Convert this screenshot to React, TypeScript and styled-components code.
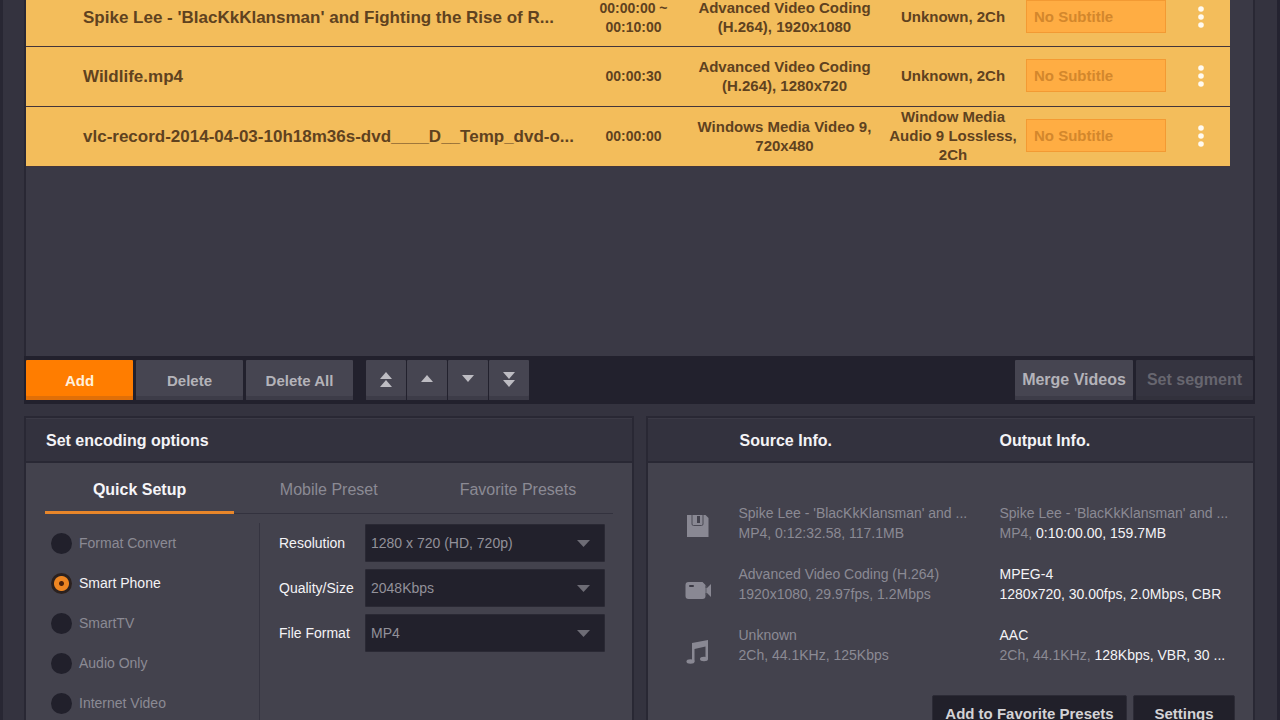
import React, { useState } from "react";
import styled, { createGlobalStyle } from "styled-components";

const GlobalStyle = createGlobalStyle`
  *, *::before, *::after { box-sizing: border-box; }
  body {
    margin: 0;
    background: #34333f;
    font-family: "Liberation Sans", Arial, sans-serif;
  }
  button, input, select { font-family: inherit; margin: 0; }
`;

const Window = styled.main`
  height: 100vh;
  overflow: hidden;
  padding: 0 22px 0 21px;
  border-left: 3px solid #282733;
  border-right: 3px solid #242330;
  background: #34333f;
`;

/* ---------- file list ---------- */

const ListArea = styled.section`
  height: 356px;
  overflow: hidden;
  padding-right: 23px;
  border: solid #292834;
  border-width: 0 2px;
  background: #3a3945;
`;

const FileTable = styled.table`
  width: 100%;
  margin-top: -11px;
  table-layout: fixed;
  border-spacing: 0;
  background: #f3bd5b;
  color: #5f421f;
`;

const Col = styled.col<{ $width?: number }>`
  width: ${(p) => (p.$width ? `${p.$width}px` : "auto")};
`;

const Row = styled.tr`
  height: 60px;
  &:first-child { height: 58px; }
`;

const Cell = styled.td`
  padding: 0 0 2px;
  border-bottom: 1px solid #43353a;
  font-size: 15px;
  font-weight: bold;
  line-height: 19px;
  text-align: center;
  white-space: pre;
`;

const TimeCell = styled(Cell)`
  padding: 0;
  font-size: 14px;
`;

const NameCell = styled(Cell)`
  padding: 0 0 0 57px;
  font-size: 17px;
  text-align: left;
`;

const SubtitleInput = styled.input`
  display: block;
  width: 140px;
  height: 33px;
  margin: 0 auto;
  padding: 0 7px;
  border: 1px solid #f39a33;
  border-radius: 0;
  background: #ffad43;
  color: #d3872c;
  font-size: 15px;
  font-weight: bold;
  outline: none;
  &::placeholder { color: #d3872c; opacity: 1; }
`;

const MenuButton = styled.button`
  display: block;
  margin: 0 auto;
  padding: 4px;
  border: 0;
  background: none;
  line-height: 0;
`;

/* ---------- toolbar ---------- */

const Toolbar = styled.div`
  display: flex;
  align-items: center;
  justify-content: space-between;
  height: 48px;
  padding: 0 2px;
  background: #22212d;
`;

const Group = styled.div<{ $gap: number }>`
  display: flex;
  gap: ${(p) => p.$gap}px;
`;

const ToolButton = styled.button<{ $width: number; $size?: number; $kind?: "primary" | "off" }>`
  display: flex;
  align-items: center;
  justify-content: center;
  width: ${(p) => p.$width}px;
  height: 40px;
  padding: 0;
  border: 0;
  border-radius: 1px;
  font-size: ${(p) => p.$size ?? 15}px;
  font-weight: bold;
  white-space: nowrap;
  background: ${(p) => (p.$kind === "primary" ? "#ff7d00" : p.$kind === "off" ? "#353440" : "#464551")};
  color: ${(p) => (p.$kind === "primary" ? "#fff0dc" : p.$kind === "off" ? "#67666f" : "#b4b3b9")};
  box-shadow: inset 0 -4px 0
    ${(p) => (p.$kind === "primary" ? "#e06f08" : p.$kind === "off" ? "#32313c" : "#3d3c48")};
`;

const ArrowGroup = styled(Group)`
  margin-left: 10px;
`;

/* ---------- panels ---------- */

const Panels = styled.div`
  display: grid;
  grid-template-columns: 1fr 1fr;
  gap: 12px;
  margin-top: 12px;
`;

const Panel = styled.section`
  border: 2px solid #292834;
  background: #43424d;
`;

const PanelHead = styled.header`
  display: grid;
  grid-template-columns: 92px 260px 1fr;
  align-items: center;
  height: 45px;
  padding-top: 2px;
  border-bottom: 2px solid #292834;
  background: #33323e;
  box-shadow: inset 0 1px 0 #3b3a46;
`;

const Heading = styled.h2<{ $wide?: boolean }>`
  margin: 0;
  padding-left: ${(p) => (p.$wide ? 20 : 0)}px;
  grid-column: ${(p) => (p.$wide ? "1 / -1" : "auto")};
  color: #f4f3f6;
  font-size: 16px;
  line-height: 20px;
`;

const Tabs = styled.div`
  display: grid;
  grid-template-columns: repeat(3, 1fr);
  height: 51px;
  margin: 0 19px;
  box-shadow: inset 0 -1px 0 #33323e;
`;

const Tab = styled.button<{ $active?: boolean }>`
  padding: 5px 0 0;
  border: 0;
  border-bottom: 3px solid ${(p) => (p.$active ? "#e8862a" : "transparent")};
  background: none;
  color: ${(p) => (p.$active ? "#f6f5f8" : "#8b8a94")};
  font-size: 16px;
  font-weight: ${(p) => (p.$active ? "bold" : "normal")};
`;

const Setup = styled.div`
  display: grid;
  grid-template-columns: 234px 1fr;
  padding: 9px 27px 0 0;
`;

const Presets = styled.div`
  display: flex;
  flex-direction: column;
  border-right: 1px solid #353440;
`;

const PresetLabel = styled.label<{ $active: boolean }>`
  display: flex;
  align-items: center;
  gap: 7px;
  height: 40px;
  padding-left: 25px;
  color: ${(p) => (p.$active ? "#f4f3f6" : "#8b8a94")};
  font-size: 14px;
`;

const Radio = styled.input`
  appearance: none;
  width: 21px;
  height: 21px;
  border-radius: 50%;
  background: #21202b;
  &:checked {
    background: radial-gradient(circle, #4a210c 0 2px, #ee8622 3px 7px, #2b211f 8px);
  }
`;

const Fields = styled.div`
  display: flex;
  flex-direction: column;
  gap: 7px;
  padding: 1px 0 0 19px;
`;

const Field = styled.div`
  display: grid;
  grid-template-columns: 86px 1fr;
  align-items: center;
`;

const FieldLabel = styled.label`
  color: #f4f3f6;
  font-size: 14px;
`;

const SelectBox = styled.div`
  position: relative;
`;

const Select = styled.select`
  appearance: none;
  display: block;
  width: 100%;
  height: 38px;
  padding: 0 30px 0 5px;
  border: 1px solid #2a2934;
  border-radius: 1px;
  background: #22212c;
  color: #92919a;
  font-size: 14px;
  outline: none;
`;

const SelectArrow = styled.svg`
  position: absolute;
  top: 16px;
  right: 15px;
  pointer-events: none;
`;

const InfoList = styled.div`
  display: flex;
  flex-direction: column;
  gap: 21px;
  padding-top: 40px;
`;

const InfoRow = styled.div`
  display: grid;
  grid-template-columns: 91px 261px 1fr;
`;

const InfoIcon = styled.svg`
  margin-left: 37px;
  fill: #898893;
`;

const InfoText = styled.p`
  margin: 0;
  color: #8b8a94;
  font-size: 14px;
  line-height: 20px;
  white-space: nowrap;
`;

const Bright = styled.span`
  color: #f4f3f6;
`;

const Actions = styled.div`
  display: flex;
  justify-content: flex-end;
  gap: 6px;
  padding: 30px 18px 20px 0;
`;

const ActionButton = styled.button<{ $width: number }>`
  width: ${(p) => p.$width}px;
  height: 36px;
  padding: 0;
  border: 1px solid #2c2b36;
  border-radius: 2px;
  background: #21202a;
  color: #d4d3d6;
  font-size: 15px;
  font-weight: bold;
  white-space: nowrap;
`;

/* ---------- data ---------- */

const files = [
  {
    name: "Spike Lee - 'BlacKkKlansman' and Fighting the Rise of R...",
    time: "00:00:00 ~\n00:10:00",
    video: "Advanced Video Coding\n(H.264), 1920x1080",
    audio: "Unknown, 2Ch",
  },
  {
    name: "Wildlife.mp4",
    time: "00:00:30",
    video: "Advanced Video Coding\n(H.264), 1280x720",
    audio: "Unknown, 2Ch",
  },
  {
    name: "vlc-record-2014-04-03-10h18m36s-dvd____D__Temp_dvd-o...",
    time: "00:00:00",
    video: "Windows Media Video 9,\n720x480",
    audio: "Window Media\nAudio 9 Lossless,\n2Ch",
  },
];

const arrows = [
  { label: "Move to top", points: ["7,0 13,7 1,7", "7,8 13,15 1,15"] },
  { label: "Move up", points: ["7,3 13,10 1,10"] },
  { label: "Move down", points: ["1,3 13,3 7,10"] },
  { label: "Move to bottom", points: ["1,0 13,0 7,7", "1,8 13,8 7,15"] },
];

const presets = ["Format Convert", "Smart Phone", "SmartTV", "Audio Only", "Internet Video"];

const fields = [
  { id: "resolution", label: "Resolution", value: "1280 x 720 (HD, 720p)" },
  { id: "quality", label: "Quality/Size", value: "2048Kbps" },
  { id: "format", label: "File Format", value: "MP4" },
];

const DiskIcon = () => (
  <InfoIcon width="26" height="40" viewBox="0 0 26 40" aria-hidden="true">
    <path d="M2 12H20.500L23.500 15V34H2Z" />
    <path d="M7 12V21Q7 22.500 8.500 22.500H16.500Q18 22.500 18 21V12" fill="none" stroke="#4b4a55" />
    <rect x="12" y="13" width="3" height="7" fill="#43424d" />
  </InfoIcon>
);

const CameraIcon = () => (
  <InfoIcon width="26" height="40" viewBox="0 0 26 40" aria-hidden="true">
    <path d="M3.500 18H17.500L20.500 21V24L22 24L26 20V33L22 29H20.500V32Q20.500 35 17.500 35H3.500Q0.500 35 0.500 32V21Q0.500 18 3.500 18Z" />
    <path d="M21 22V31" stroke="#5b5a65" />
    <rect x="4" y="21" width="5" height="2" rx="1" fill="#3b3a45" />
  </InfoIcon>
);

const MusicIcon = () => (
  <InfoIcon width="26" height="40" viewBox="0 0 26 40" aria-hidden="true">
    <path d="M7 18L23 15V34H20.500V21.500L9.500 24V36.500H7Z" />
    <ellipse cx="5.500" cy="36.500" rx="4" ry="2.200" />
    <ellipse cx="19" cy="34" rx="4" ry="2.200" />
  </InfoIcon>
);

export default function App() {
  const [preset, setPreset] = useState("Smart Phone");

  return (
    <>
      <GlobalStyle />
      <Window>
        <ListArea>
          <FileTable>
            <colgroup>
              <Col />
              <Col $width={99} />
              <Col $width={203} />
              <Col $width={134} />
              <Col $width={152} />
              <Col $width={58} />
            </colgroup>
            <tbody>
              {files.map((f) => (
                <Row key={f.name}>
                  <NameCell>{f.name}</NameCell>
                  <TimeCell>{f.time}</TimeCell>
                  <Cell>{f.video}</Cell>
                  <Cell>{f.audio}</Cell>
                  <Cell>
                    <SubtitleInput readOnly placeholder="No Subtitle" aria-label="Subtitle" />
                  </Cell>
                  <Cell>
                    <MenuButton aria-label="More">
                      <svg width="6" height="22" viewBox="0 0 6 22" fill="#fffaf0">
                        <circle cx="3" cy="3" r="2.800" />
                        <circle cx="3" cy="11" r="2.800" />
                        <circle cx="3" cy="19" r="2.800" />
                      </svg>
                    </MenuButton>
                  </Cell>
                </Row>
              ))}
            </tbody>
          </FileTable>
        </ListArea>

        <Toolbar>
          <Group $gap={3}>
            <ToolButton $width={107} $kind="primary">Add</ToolButton>
            <ToolButton $width={107}>Delete</ToolButton>
            <ToolButton $width={107}>Delete All</ToolButton>
            <ArrowGroup $gap={1}>
              {arrows.map((a) => (
                <ToolButton key={a.label} $width={40} aria-label={a.label}>
                  <svg width="14" height="16" viewBox="0 0 14 16" fill="#bdbcc2">
                    {a.points.map((p) => (
                      <polygon key={p} points={p} />
                    ))}
                  </svg>
                </ToolButton>
              ))}
            </ArrowGroup>
          </Group>
          <Group $gap={3}>
            <ToolButton $width={118} $size={16}>Merge Videos</ToolButton>
            <ToolButton $width={117} $size={16} $kind="off">Set segment</ToolButton>
          </Group>
        </Toolbar>

        <Panels>
          <Panel>
            <PanelHead>
              <Heading $wide>Set encoding options</Heading>
            </PanelHead>
            <Tabs role="tablist">
              <Tab role="tab" aria-selected="true" $active>Quick Setup</Tab>
              <Tab role="tab" aria-selected="false">Mobile Preset</Tab>
              <Tab role="tab" aria-selected="false">Favorite Presets</Tab>
            </Tabs>
            <Setup>
              <Presets>
                {presets.map((p) => (
                  <PresetLabel key={p} $active={p === preset}>
                    <Radio type="radio" name="preset" checked={p === preset} onChange={() => setPreset(p)} />
                    {p}
                  </PresetLabel>
                ))}
              </Presets>
              <Fields>
                {fields.map((f) => (
                  <Field key={f.id}>
                    <FieldLabel htmlFor={f.id}>{f.label}</FieldLabel>
                    <SelectBox>
                      <Select id={f.id} defaultValue={f.value}>
                        <option>{f.value}</option>
                      </Select>
                      <SelectArrow width="13" height="7" viewBox="0 0 13 7" fill="#6d6c75">
                        <polygon points="0,0 13,0 6.5,7" />
                      </SelectArrow>
                    </SelectBox>
                  </Field>
                ))}
              </Fields>
            </Setup>
          </Panel>

          <Panel>
            <PanelHead>
              <span />
              <Heading>Source Info.</Heading>
              <Heading>Output Info.</Heading>
            </PanelHead>
            <InfoList>
              <InfoRow>
                <DiskIcon />
                <InfoText>
                  Spike Lee - 'BlacKkKlansman' and ...
                  <br />
                  MP4, 0:12:32.58, 117.1MB
                </InfoText>
                <InfoText>
                  Spike Lee - 'BlacKkKlansman' and ...
                  <br />
                  MP4, <Bright>0:10:00.00, 159.7MB</Bright>
                </InfoText>
              </InfoRow>
              <InfoRow>
                <CameraIcon />
                <InfoText>
                  Advanced Video Coding (H.264)
                  <br />
                  1920x1080, 29.97fps, 1.2Mbps
                </InfoText>
                <InfoText>
                  <Bright>
                    MPEG-4
                    <br />
                    1280x720, 30.00fps, 2.0Mbps, CBR
                  </Bright>
                </InfoText>
              </InfoRow>
              <InfoRow>
                <MusicIcon />
                <InfoText>
                  Unknown
                  <br />
                  2Ch, 44.1KHz, 125Kbps
                </InfoText>
                <InfoText>
                  <Bright>AAC</Bright>
                  <br />
                  2Ch, 44.1KHz, <Bright>128Kbps, VBR, 30 ...</Bright>
                </InfoText>
              </InfoRow>
            </InfoList>
            <Actions>
              <ActionButton $width={195}>Add to Favorite Presets</ActionButton>
              <ActionButton $width={102}>Settings</ActionButton>
            </Actions>
          </Panel>
        </Panels>
      </Window>
    </>
  );
}
